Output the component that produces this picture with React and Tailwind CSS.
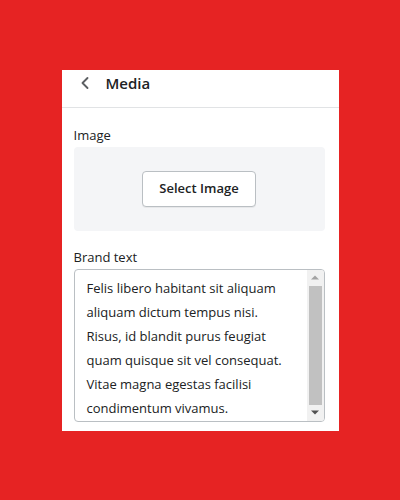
import { ChevronLeft } from "lucide-react";

const brandText = [
  "Felis libero habitant sit aliquam",
  "aliquam dictum tempus nisi.",
  "Risus, id blandit purus feugiat",
  "quam quisque sit vel consequat.",
  "Vitae magna egestas facilisi",
  "condimentum vivamus.",
];

// fake native scrollbar, headless chromium draws overlay bars otherwise
function Scrollbar() {
  return (
    <div className="w-[17px] bg-[#f1f1f1] flex flex-col shrink-0">
      <div className="h-[16px] flex items-center justify-center">
        <svg width="8" height="5" viewBox="0 0 8 5">
          <path d="M0 4.5 L4 0.5 L8 4.5 Z" fill="#a3a3a3" />
        </svg>
      </div>
      <div className="flex-1 px-[2px]">
        <div className="h-full bg-[#c1c1c1]" />
      </div>
      <div className="h-[16px] flex items-center justify-center">
        <svg width="8" height="5" viewBox="0 0 8 5">
          <path d="M0 0.5 L8 0.5 L4 4.5 Z" fill="#505050" />
        </svg>
      </div>
    </div>
  );
}

export default function App() {
  return (
    <div
      className="w-[400px] h-[500px] bg-[#e62323] flex items-center justify-center"
      style={{ fontFamily: '"Open Sans", "Noto Sans", sans-serif' }}
    >
      <div className="w-[277px] h-[361px] bg-white flex flex-col">
        {/* Header */}
        <div className="h-[38px] flex items-center border-b border-[#e1e3e5] pl-[13px] pb-[10px]">
          <ChevronLeft className="w-[20px] h-[20px] text-[#5c5f62]" strokeWidth={2.25} />
          <span className="ml-[11px] text-[15px] font-semibold text-[#202223]">Media</span>
        </div>

        <div className="pl-[12px] pr-[14px] pt-[17px] flex flex-col">
          <label className="text-[13px] leading-[20px] text-[#202223]">Image</label>
          <div className="mt-[2px] h-[84px] rounded-[4px] bg-[#f4f5f7] flex items-center justify-center">
            <button className="h-[36px] px-[16px] rounded-[4px] border border-[#babfc3] bg-white text-[13px] font-semibold text-[#202223] shadow-[0_1px_0_rgba(0,0,0,0.05)]">
              Select Image
            </button>
          </div>

          <label className="mt-[16px] text-[13px] leading-[20px] text-[#202223]">Brand text</label>
          <div className="mt-[2px] h-[153px] flex rounded-[4px] border border-[#babfc3] overflow-hidden">
            <div className="flex-1 pl-[12px] pt-[6px] text-[13px] leading-[24px] text-[#202223]">
              {brandText.map((line) => (
                <div key={line}>{line}</div>
              ))}
            </div>
            <Scrollbar />
          </div>
        </div>
      </div>
    </div>
  );
}
